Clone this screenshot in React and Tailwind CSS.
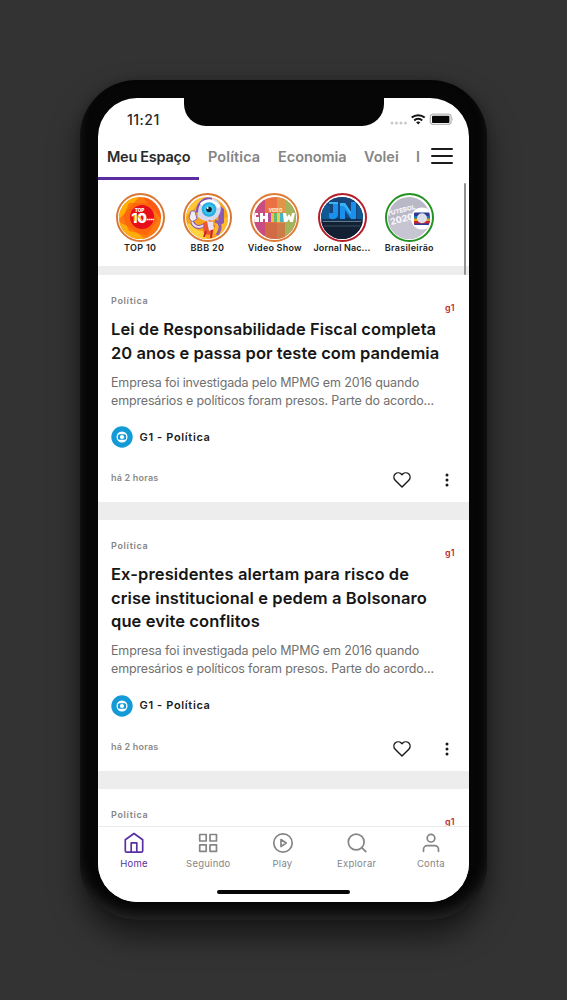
import React from 'react';

const tabs = [
  { label: 'Meu Espaço', cls: 'w-[101px] border-[#5b2da3] text-[#29292b]', text: 'tracking-[-0.28px]' },
  { label: 'Política', cls: 'w-[70px] border-transparent text-[#858585]', text: 'tracking-[0.1px]' },
  { label: 'Economia', cls: 'w-[86px] border-transparent text-[#858585]', text: 'tracking-[-0.05px]' },
  { label: 'Volei', cls: 'w-[52px] border-transparent text-[#858585]', text: 'tracking-[0px]' },
  { label: 'I', cls: 'w-[15px] border-transparent text-[#858585]', text: '' },
];

function TopTen() {
  return (
    <svg viewBox="0 0 42 42" className="size-[42px] rounded-full">
      <rect width="42" height="42" fill="#fc7a10" />
      <path d="M0 0H20L7 15 0 22Z" fill="#ffb000" />
      <path d="M24 0H42V22L34 12Z" fill="#ff5a12" />
      <path d="M0 25L12 31 26 42H0Z" fill="#ffad0c" />
      <path d="M10 6L32 6 38 24 28 38 10 34 4 20Z" fill="#ff5c0c" opacity=".65" />
      <circle cx="23" cy="20" r="12" fill="#e80d1b" />
      <text x="20.5" y="14.5" textAnchor="middle" fontSize="4.6" fontWeight="900" fill="#fff">TOP</text>
      <text x="20" y="26" textAnchor="middle" fontSize="13.5" fontWeight="900" fill="#fff">10</text>
      <path d="M15.500 18v6M19 19l4 4" stroke="#ffc01e" strokeWidth="1.3" />
      <path d="M27.500 22.500h7.500" stroke="#fff" strokeWidth="1.600" strokeDasharray="1.800 .4" />
    </svg>
  );
}

function Robot() {
  return (
    <svg viewBox="0 0 42 42" className="size-[42px] rounded-full">
      <rect width="42" height="42" fill="#f9a51b" />
      <path d="M0 0h18L6 14 0 18z" fill="#ffc63a" />
      <path d="M0 27c8-3 8 8 17 7l4 8H4z" fill="#ffd23f" />
      <path d="M30 25l12-5v20l-14-4z" fill="#ffbd2c" />
      <path d="M33 8l5 4v14l-6 3z" fill="#8b5bb8" />
      <g transform="translate(-3 -1.500)">
        <path d="M14 13C15 3 24 0 31 3s9 11 4 18-17 5-20 0z" fill="#d9d9ec" />
        <path d="M14 17C14 7 21 2 29 3" fill="none" stroke="#8653b1" strokeWidth="2" />
        <path d="M18 9c5-5 14-5 18 3" fill="none" stroke="#fff" strokeWidth="3" />
        <circle cx="26" cy="14" r="7.3" fill="#27aee2" />
        <circle cx="26" cy="14" r="5" fill="#3cc8f1" />
        <circle cx="26" cy="14" r="2.800" fill="#10212d" />
        <circle cx="24.600" cy="12.400" r="1" fill="#fff" />
      </g>
      <path d="M5 14l-2 7 3 4 5-3-2-8z" fill="#eeeef5" stroke="#8c64ae" />
      <path d="M6 25c3 6 8 6 12 3" fill="none" stroke="#884fa7" strokeWidth="4" />
      <path d="M6 25c3 6 8 6 12 3" fill="none" stroke="#e4e2f1" strokeWidth="2" />
      <path d="M17 26l7-3 5 6-4 9-7-1z" fill="#ef542f" />
      <path d="M21 24l6 1 1 7-5 2z" fill="#e8e4f4" />
      <path d="M29 24c7 2 6 8 2 14" fill="none" stroke="#925eac" strokeWidth="3" />
      <path d="M18 40l2-6M25 41l1-8" stroke="#c42634" strokeWidth="2" />
    </svg>
  );
}

function VideoShow() {
  return (
    <svg viewBox="0 0 42 42" className="size-[42px] rounded-full">
      <rect width="42" height="42" fill="#eb7044" />
      <path d="M0 0h11v42H0z" fill="#c94d7e" />
      <path d="M23 0h8v42h-8z" fill="#e09548" />
      <path d="M31 0h11v42H31z" fill="#a3b45a" />
      <path d="M11 26h20v16H11z" fill="#bc6849" opacity=".55" />
      <text x="21.500" y="14.500" textAnchor="middle" fontSize="4.300" fontWeight="800" fill="#fff1cf">VIDEO</text>
      <path d="M14 16h3v9h-3z" fill="#b94a9b" />
      <path d="M17 16h3v9h-3z" fill="#edc43e" />
      <path d="M20 16h3v9h-3z" fill="#65ba73" />
      <path d="M23 16h3v9h-3z" fill="#e4d356" />
      <path d="M26 16h3v9h-3z" fill="#45b5c4" />
      <path d="M0 16h4v2H2v2h3v5H0zM6 16h3v3h2v-3h3v9h-3v-3H9v3H6zM29 16h3l1 4 2-3 2 3 1-4h3l-2 9h-3l-1-3-2 3h-3z" fill="#fff" />
    </svg>
  );
}

function Jornal() {
  return (
    <svg viewBox="0 0 42 42" className="size-[42px] rounded-full">
      <rect width="42" height="42" fill="#123155" />
      <path d="M0 0h42v21H0z" fill="#17457a" />
      <path d="M0 4l9 5v13H0zM36 9l6-5v18h-6z" fill="#0f5a94" />
      <path d="M0 25h42v17H0z" fill="#142033" />
      <path d="M2 24.500h38" stroke="#6a8499" strokeWidth=".9" />
      <path d="M3 29h36" stroke="#2d4055" strokeWidth="1.500" />
      <path d="M8 5h9v12q0 6-7 5l-2-1v-5h4V5zM19 6h5l6 9V5h5v17h-5l-6-9v9h-5z" fill="#1a8fec" />
      <path d="M8 5h9v2H8zM19 6h5l6 9v3l-7-9h-4z" fill="#36b4f6" />
    </svg>
  );
}

function Futebol() {
  return (
    <svg viewBox="0 0 42 42" className="size-[42px] rounded-full">
      <rect width="42" height="42" fill="#b9b8c6" />
      <path d="M0 30L28 13l14 8v21H8z" fill="#c6c5d1" />
      <g transform="rotate(-14 12 19)" fill="#f5f5f9">
        <path d="M1 9h4v1.500H2.500V12H5v1.500H2.500V16H1z" />
        <text x="4" y="16" fontSize="6.200" fontWeight="800">UTEBOL</text>
        <text x="1" y="25.500" fontSize="9" fontWeight="800">2020</text>
      </g>
      <circle cx="34" cy="21.500" r="11" fill="#fff" />
      <rect x="26" y="15.500" width="16" height="12.500" rx="1" fill="#2b3a96" />
      <path d="M26 19h16v2.500H26z" fill="#167caf" />
      <path d="M26 21.500h16v2.500H26z" fill="#e2a71e" />
      <path d="M26 24h16v2.500H26z" fill="#c72732" />
      <circle cx="34" cy="21.300" r="5" fill="#dedee8" />
    </svg>
  );
}

const stories = [
  { label: 'TOP 10', ring: 'border-[#d97735]', Art: TopTen, text: 'tracking-[0.35px]' },
  { label: 'BBB 20', ring: 'border-[#d97735]', Art: Robot, text: 'tracking-[0.35px]' },
  { label: 'Video Show', ring: 'border-[#e07c35]', Art: VideoShow, text: 'tracking-[0.22px]' },
  { label: 'Jornal Nac...', ring: 'border-[#b51d29]', Art: Jornal, text: 'tracking-[0.12px]' },
  { label: 'Brasileirão', ring: 'border-[#259323]', Art: Futebol, text: 'tracking-[0.27px]' },
];

function GlobeBadge() {
  return (
    <svg viewBox="0 0 22 22" className="size-[22px]">
      <circle cx="11" cy="11" r="10.7" fill="#149bd7" />
      <circle cx="11" cy="11" r="5.500" fill="#fff" />
      <rect x="6.900" y="8.200" width="8.200" height="5.600" rx="1.600" fill="#149bd7" />
      <circle cx="11" cy="11" r="2.100" fill="#fff" />
    </svg>
  );
}

function ArticleHeader() {
  return (
    <div className="flex h-[43px] shrink-0 justify-between">
      <span className="mt-[19px] text-[9px] leading-[14px] font-semibold tracking-[0.68px] text-[#858585]">Política</span>
      <span className="mt-[26px] text-[9px] leading-[14px] font-semibold text-[#c4292d]">g1</span>
    </div>
  );
}

function Article({ lines }) {
  return (
    <article className="flex shrink-0 flex-col border-b-18 border-[#ededed] bg-white pr-[14.5px] pl-[13px]">
      <ArticleHeader />
      <h2 className="text-[16.5px] leading-[23.5px] font-semibold text-[#161616]">
        {lines.map(([line, spacing]) => (
          <span key={line} className={`block whitespace-nowrap ${spacing}`}>{line}</span>
        ))}
      </h2>
      <p className="mt-[8.5px] text-[12.5px] leading-[18px] text-[#707070]">
        <span className="block tracking-[-0.14px] whitespace-nowrap">Empresa foi investigada pelo MPMG em 2016 quando</span>
        <span className="block tracking-[-0.15px] whitespace-nowrap">empresários e políticos foram presos. Parte do acordo...</span>
      </p>
      <div className="mt-[16.5px] flex h-[22px] items-center gap-[6.5px]">
        <GlobeBadge />
        <span className="text-[11px] font-semibold tracking-[0.65px] text-[#1b1b1b]">G1 - Política</span>
      </div>
      <div className="mt-[9px] flex h-[45px] items-start">
        <span className="mt-[14px] text-[9px] leading-[14px] font-semibold tracking-[0.2px] text-[#8a8a8a]">há 2 horas</span>
        <svg viewBox="0 0 24 24" className="mt-[13px] ml-auto size-[20px]" fill="none" stroke="#18191b" strokeWidth="1.700" strokeLinejoin="round">
          <path d="M12 20.400L3.800 12.200A5.200 5.200 0 0 1 3.800 4.900 5.200 5.200 0 0 1 11.100 4.900L12 5.800 12.900 4.900A5.200 5.200 0 0 1 20.200 4.900 5.200 5.200 0 0 1 20.200 12.200Z" />
        </svg>
        <svg viewBox="0 0 4 14" className="mt-[16px] mr-[6px] ml-[33px] h-[14px] w-[4px]" fill="#18191b">
          <circle cx="2" cy="2" r="1.500" /><circle cx="2" cy="7" r="1.500" /><circle cx="2" cy="12" r="1.500" />
        </svg>
      </div>
    </article>
  );
}

const navItems = [
  { label: 'Home', color: 'text-[#5930a3]', icon: <><path d="M2.300 7.800L11 1.500l8.700 6.300v11a1.400 1.400 0 0 1-1.400 1.400H3.700a1.400 1.400 0 0 1-1.400-1.400z" /><path d="M8.200 20.200v-9.400h5.600v9.400" /></> },
  { label: 'Seguindo', color: 'text-[#858585]', icon: <path d="M2.700 2.500h6.500v6.500H2.700zM13 2.500h6.500v6.500H13zM2.700 12.800h6.500v6.500H2.700zM13 12.800h6.500v6.500H13z" /> },
  { label: 'Play', color: 'text-[#858585]', icon: <><circle cx="11" cy="11" r="9.200" /><path d="M9 7.500l5.200 3.500L9 14.500z" /></> },
  { label: 'Explorar', color: 'text-[#858585]', icon: <><circle cx="10.200" cy="10" r="7.900" /><path d="M15.800 15.600l4 4" /></> },
  { label: 'Conta', color: 'text-[#858585]', icon: <><circle cx="11" cy="6.200" r="3.800" /><path d="M3.500 19.300v-2a3.600 3.600 0 0 1 3.600-3.600h7.800a3.600 3.600 0 0 1 3.600 3.600v2" /></> },
];

export default function App() {
  return (
    <main className="flex h-[1000px] w-[567px] justify-center bg-[#333333] pt-[80px] font-['Inter',sans-serif]">
      <div className="h-[840px] w-[407px] rounded-[57px] bg-[#060606] p-[18px] shadow-[inset_0_-9px_12px_-2px_#242424,0_16px_30px_rgba(0,0,0,0.55),0_0_10px_rgba(0,0,0,0.2)]">
        <div className="relative flex h-[804px] w-[371px] flex-col overflow-hidden rounded-[39px] bg-white">
          <header className="flex h-[39px] shrink-0 justify-between">
            <time className="ml-[29px] w-[57px] pt-[12px] text-[14px] leading-[20px] font-medium tracking-[0.5px] text-[#29292b]">11:21</time>
            <div className="h-[28px] w-[200px] rounded-b-[22px] bg-[#060606]" />
            <div className="flex h-[42px] w-[85px] items-center pl-[6px]">
              <svg viewBox="0 0 64 16" className="h-[16px] w-[64px]">
                <g fill="#c9c9c9"><circle cx="2" cy="12" r="1.500" /><circle cx="6.500" cy="12" r="1.500" /><circle cx="11" cy="12" r="1.500" /><circle cx="15.500" cy="12" r="1.500" /></g>
                <g fill="none" stroke="#111" strokeWidth="2"><path d="M21.700 6.600a9.800 9.800 0 0 1 13 0" /><path d="M24.200 9.400a6 6 0 0 1 8 0" /></g>
                <path d="M26.100 11.200q2.100-1.300 4.200 0l-2.100 2.300z" fill="#111" />
                <rect x="40.300" y="3.200" width="20.800" height="10.200" rx="2.800" fill="#fff" stroke="#b8b8b8" strokeWidth="1.300" />
                <rect x="42" y="4.800" width="17.400" height="7.200" rx="1" fill="#080808" />
                <path d="M62.400 6.500q1.400 1.800 0 3.600z" fill="#aaa" />
              </svg>
            </div>
          </header>

          <nav className="flex h-[43px] shrink-0">
            <div className="flex w-[324px]">
              {tabs.map((tab) => (
                <div key={tab.label} className={`shrink-0 border-b-3 pt-[10px] pl-[9px] text-[14.5px] leading-[20px] font-semibold whitespace-nowrap ${tab.cls} ${tab.text}`}>{tab.label}</div>
              ))}
            </div>
            <div className="mt-[11px] ml-[9px] flex h-[16px] w-[22px] flex-col justify-between">
              <i className="h-[2px] rounded-full bg-[#1c1c1e]" /><i className="h-[2px] rounded-full bg-[#1c1c1e]" /><i className="h-[2px] rounded-full bg-[#1c1c1e]" />
            </div>
          </nav>

          <section className="flex min-h-0 flex-1 flex-col overflow-hidden">
            <div className="flex h-[95px] shrink-0 border-b-9 border-[#ededed] pt-[13px] pl-[8.5px]">
              {stories.map(({ label, ring, Art, text }) => (
                <div key={label} className="flex w-[67.3px] shrink-0 flex-col items-center">
                  <div className={`flex size-[49px] shrink-0 items-center justify-center rounded-full border-2 bg-white ${ring}`}><Art /></div>
                  <span className={`text-[9px] leading-[12px] font-semibold whitespace-nowrap text-[#242424] ${text}`}>{label}</span>
                </div>
              ))}
            </div>
            <Article lines={[['Lei de Responsabilidade Fiscal completa', 'tracking-[0.07px]'], ['20 anos e passa por teste com pandemia', 'tracking-[0.05px]']]} />
            <Article lines={[['Ex-presidentes alertam para risco de', 'tracking-[0.12px]'], ['crise institucional e pedem a Bolsonaro', 'tracking-[0.1px]'], ['que evite conflitos', 'tracking-[0.1px]']]} />
            <article className="shrink-0 bg-white pr-[14.5px] pl-[13px]">
              <ArticleHeader />
            </article>
          </section>
          <div className="absolute top-[85px] right-[3px] h-[92px] w-[2px] rounded-full bg-[#929292]" />

          <footer className="h-[76px] shrink-0 border-t border-[#ebebeb] bg-white">
            <div className="mr-[1px] ml-[-1px] flex h-[47px]">
              {navItems.map(({ label, color, icon }) => (
                <div key={label} className={`flex flex-1 flex-col items-center pt-[5px] ${color}`}>
                  <svg viewBox="0 0 22 22" className="size-[22px]" fill="none" stroke="currentColor" strokeWidth="1.700" strokeLinecap="round" strokeLinejoin="round">{icon}</svg>
                  <span className="mt-[3px] text-[9.5px] leading-[14px] tracking-[0.25px]">{label}</span>
                </div>
              ))}
            </div>
            <div className="mx-auto mt-[16px] h-[4px] w-[133px] rounded-full bg-[#070707]" />
          </footer>
        </div>
      </div>
    </main>
  );
}
